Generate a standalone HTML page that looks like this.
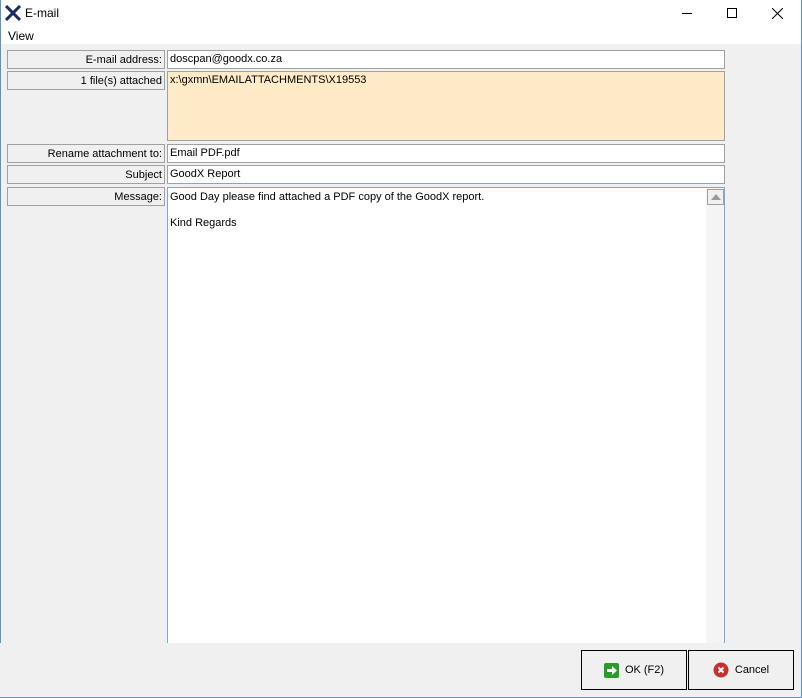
<!DOCTYPE html><html><head><style>
body{margin:0;width:802px;height:698px;position:relative;overflow:hidden;font-family:"Liberation Sans",sans-serif;font-size:11px;background:#f0f0f0}
.a{position:absolute;box-sizing:border-box}
.lbl{background:#f0f0f0;border:1px solid #a0a0a0;text-align:right;padding-right:2px;line-height:18px;color:#000}
.inp{background:#fff;border:1px solid #a0a0a0;padding-left:2px;line-height:17px}
.btn{border:1px solid #000;background:#f0f0f0;font-size:11px;display:flex;align-items:center;justify-content:center;gap:6px}
</style></head><body>
<div class="a" style="left:0;top:0;width:802px;height:44px;background:#fff"></div>
<div class="a" style="left:0;top:0;width:1px;height:698px;background:#5b8fd0"></div>
<div class="a" style="right:0;top:0;width:1px;height:698px;background:#5b8fd0"></div>
<div class="a" style="left:0;bottom:0;width:802px;height:1px;background:#5b8fd0"></div>
<svg class="a" style="left:5px;top:5px" width="16" height="16"><path d="M1 1L15 15M15 1L1 15" stroke="#1a2a6a" stroke-width="3"/></svg>
<div class="a" style="left:25px;top:6px;font-size:12px">E-mail</div>
<div class="a" style="left:682px;top:13px;width:10px;height:1px;background:#000"></div>
<div class="a" style="left:727px;top:8px;width:10px;height:10px;border:1px solid #000"></div>
<svg class="a" style="left:772px;top:8px" width="11" height="11"><path d="M0 0L11 11M11 0L0 11" stroke="#000"/></svg>
<div class="a" style="left:8px;top:29px;font-size:12px">View</div>
<div class="a lbl" style="left:7px;top:50px;width:158px;height:19px">E-mail address:</div>
<div class="a inp" style="left:167px;top:50px;width:558px;height:19px">doscpan@goodx.co.za</div>
<div class="a lbl" style="left:7px;top:71px;width:158px;height:19px">1 file(s) attached</div>
<div class="a inp" style="left:167px;top:71px;width:558px;height:70px;background:#ffebc8">x:\gxmn\EMAILATTACHMENTS\X19553</div>
<div class="a lbl" style="left:7px;top:144px;width:158px;height:19px">Rename attachment to:</div>
<div class="a inp" style="left:167px;top:144px;width:558px;height:19px">Email PDF.pdf</div>
<div class="a lbl" style="left:7px;top:165px;width:158px;height:19px">Subject</div>
<div class="a inp" style="left:167px;top:165px;width:558px;height:19px">GoodX Report</div>
<div class="a lbl" style="left:7px;top:187px;width:158px;height:19px">Message:</div>
<div class="a inp" style="left:167px;top:187px;width:558px;height:460px;border-color:#7aa7d8;line-height:13px;padding-top:3px">Good Day please find attached a PDF copy of the GoodX report.<br><br>Kind Regards</div>
<div class="a" style="left:706px;top:188px;width:18px;height:458px;background:#f4f4f4"></div>
<div class="a" style="left:707px;top:189px;width:17px;height:16px;border:1px solid #a0a0a0;background:#f0f0f0"></div>
<svg class="a" style="left:711px;top:194px" width="10" height="6"><path d="M0 6L5 0L10 6Z" fill="#999"/></svg>
<div class="a" style="left:0;top:643px;width:801px;height:54px;background:#f0f0f0"></div>
<div class="a btn" style="left:581px;top:650px;width:106px;height:40px"><svg width="15" height="15"><rect width="15" height="15" rx="2" fill="#2a9a2a"/><path d="M3 6h5V3l5 4.5-5 4.5V9H3z" fill="#fff"/></svg>OK (F2)</div>
<div class="a btn" style="left:688px;top:650px;width:106px;height:40px"><svg width="16" height="16"><circle cx="8" cy="8" r="7.5" fill="#c83030"/><path d="M5.5 5.5l5 5M10.5 5.5l-5 5" stroke="#fff" stroke-width="2"/></svg>Cancel</div>
</body></html>
